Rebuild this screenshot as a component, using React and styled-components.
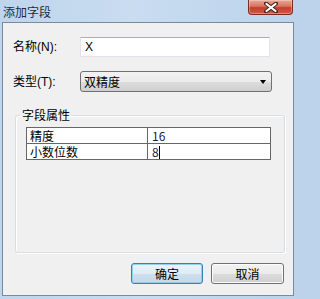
import styled, { createGlobalStyle } from 'styled-components';

const GlobalStyle = createGlobalStyle`
  html, body { margin: 0; padding: 0; }
  body {
    background: #bcd3eb;
    font-family: "Liberation Sans", "Noto Sans CJK SC", sans-serif;
    font-size: 12px;
    color: #000;
  }
`;

const Window = styled.div`
  width: 297px;
  height: 299px;
  display: flex;
  flex-direction: column;
  background: linear-gradient(90deg, #bfd5ec 0%, #c9dcf0 45%, #bcd3eb 100%);
  overflow: hidden;
`;

const TitleBar = styled.div`
  height: 22px;
  display: flex;
  align-items: flex-start;
  flex-shrink: 0;
`;

const Title = styled.div`
  padding: 4px 0 0 3px;
  font-family: "Noto Sans CJK SC", sans-serif;
  font-size: 12px;
  line-height: 15px;
  color: #1e2b3a;
`;

const CloseButton = styled.div`
  margin-left: auto;
  margin-right: 4px;
  width: 43px;
  height: 14px;
  border: 1px solid #7d2b22;
  border-top: none;
  border-radius: 0 0 4px 4px;
  background: linear-gradient(#eaa797 0%, #d8735e 45%, #c23f28 55%, #d25a43 100%);
  box-shadow: inset 0 0 0 1px rgba(255, 255, 255, 0.3);
  display: flex;
  align-items: center;
  justify-content: center;
`;

const Client = styled.div`
  flex: 1;
  margin: 0 3px 3px 2px;
  border: 1px solid #7a8a9e;
  background: #f0f0f0;
  padding: 14px 9px 0 10px;
  display: flex;
  flex-direction: column;
`;

const FormRow = styled.div`
  display: flex;
  align-items: center;
  margin-bottom: ${p => p.$gap}px;
`;

const Label = styled.div`
  width: 67px;
  line-height: 14px;
`;

const TextInput = styled.div`
  width: 190px;
  height: 20px;
  box-sizing: border-box;
  border: 1px solid #e2e3ea;
  border-top-color: #abadb3;
  background: #fff;
  padding: 0 0 0 4px;
  display: flex;
  align-items: center;
  line-height: 14px;
`;

const Select = styled.div`
  width: 192px;
  height: 21px;
  box-sizing: border-box;
  border: 1px solid #707070;
  border-radius: 3px;
  background: linear-gradient(#f2f2f2 0%, #ebebeb 50%, #dddddd 51%, #cfcfcf 100%);
  padding: 0 5px 0 3px;
  display: flex;
  align-items: center;
  justify-content: space-between;
  font-family: "Noto Sans CJK SC", sans-serif;
  line-height: 14px;
`;

const Arrow = styled.span`
  width: 0;
  height: 0;
  border-left: 3.5px solid transparent;
  border-right: 3.5px solid transparent;
  border-top: 4px solid #000;
  margin-top: 1px;
`;

const Group = styled.fieldset`
  margin: 0 0 0 2px;
  height: 146px;
  box-sizing: border-box;
  border: 1px solid #d5dfe5;
  border-radius: 3px;
  box-shadow: inset 1px 1px 0 #fff, 1px 1px 0 #fff;
  padding: 0 13px 0 10px;
`;

const Legend = styled.legend`
  margin-left: -6px;
  padding: 0 2px;
  font-family: "Noto Sans CJK SC", sans-serif;
  font-size: 12px;
  line-height: 16px;
`;

const Grid = styled.table`
  margin-top: 4px;
  width: 245px;
  border-collapse: collapse;
  border: 1px solid #555;
  background: #fff;
`;

const Cell = styled.td`
  border: 1px solid #666;
  height: 15px;
  padding: 0 0 0 ${p => (p.$value ? 4 : 3)}px;
  width: ${p => (p.$value ? 'auto' : '117px')};
  font-family: "Noto Sans CJK SC", sans-serif;
  font-size: 12px;
  line-height: 15px;
  color: ${p => (p.$value ? '#1a1a40' : '#000')};
`;

const Caret = styled.span`
  display: inline-block;
  width: 1px;
  height: 13px;
  background: #000;
  vertical-align: -2px;
`;

const Buttons = styled.div`
  display: flex;
  justify-content: flex-end;
  gap: 8px;
  margin-top: 10px;
`;

const Button = styled.div`
  width: ${p => p.$w}px;
  height: 21px;
  box-sizing: border-box;
  border-radius: 3px;
  display: flex;
  align-items: center;
  justify-content: center;
  font-family: "Noto Sans CJK SC", sans-serif;
  font-size: 12px;
  border: 1px solid ${p => (p.$primary ? '#3c7fb1' : '#707070')};
  background: ${p =>
    p.$primary
      ? 'linear-gradient(#eaf4fb 0%, #dfecf6 50%, #cde0ee 51%, #c3d8e8 100%)'
      : 'linear-gradient(#f2f2f2 0%, #ebebeb 50%, #dddddd 51%, #cfcfcf 100%)'};
  box-shadow: ${p => (p.$primary ? 'inset 0 0 0 1px #95cdef' : 'inset 0 0 0 1px #fcfcfc')};
`;

function CloseIcon() {
  return (
    <svg width="14" height="11" viewBox="0 0 14 11">
      <path d="M2 1.5 L12 9.5 M12 1.5 L2 9.5" stroke="#4a2520" strokeWidth="4" strokeLinecap="round" />
      <path d="M2.5 2 L11.5 9 M11.5 2 L2.5 9" stroke="#fff" strokeWidth="2.2" strokeLinecap="round" />
    </svg>
  );
}

export default function App() {
  return (
    <Window>
      <GlobalStyle />
      <TitleBar>
        <Title>添加字段</Title>
        <CloseButton><CloseIcon /></CloseButton>
      </TitleBar>
      <Client>
        <FormRow $gap={14}>
          <Label>名称(N):</Label>
          <TextInput>X</TextInput>
        </FormRow>
        <FormRow $gap={15}>
          <Label>类型(T):</Label>
          <Select>
            <span>双精度</span>
            <Arrow />
          </Select>
        </FormRow>
        <Group>
          <Legend>字段属性</Legend>
          <Grid>
            <tbody>
              <tr>
                <Cell>精度</Cell>
                <Cell $value>16</Cell>
              </tr>
              <tr>
                <Cell>小数位数</Cell>
                <Cell $value>8<Caret /></Cell>
              </tr>
            </tbody>
          </Grid>
        </Group>
        <Buttons>
          <Button $primary $w={72}>确定</Button>
          <Button $w={73}>取消</Button>
        </Buttons>
      </Client>
    </Window>
  );
}
